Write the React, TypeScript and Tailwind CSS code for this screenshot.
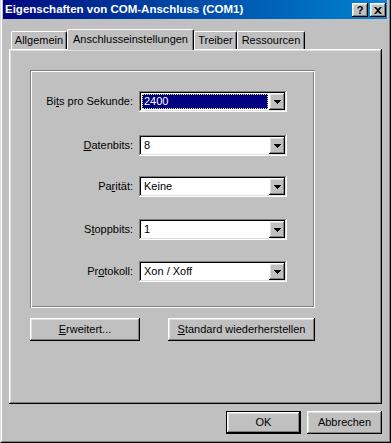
import React from 'react';

const raised =
  'shadow-[inset_-1px_-1px_#000,inset_1px_1px_#fff,inset_-2px_-2px_#808080,inset_2px_2px_#dfdfdf]';
const sunken =
  'shadow-[inset_-1px_-1px_#fff,inset_1px_1px_#808080,inset_-2px_-2px_#dfdfdf,inset_2px_2px_#000]';

function Arrow() {
  return (
    <svg width="7" height="4" viewBox="0 0 7 4">
      <path d="M0 0h7v1H0zM1 1h5v1H1zM2 2h3v1H2zM3 3h1v1H3z" fill="#000" />
    </svg>
  );
}

function Combo({ value, selected }: { value: string; selected?: boolean }) {
  return (
    <div className={`h-[21px] w-[148px] bg-white flex items-center p-[2px] ${sunken}`}>
      <div className="flex-1 h-full flex items-center pl-[1px] pr-[1px]">
        {selected ? (
          <div className="h-[15px] w-full bg-[#000080] text-white border border-dotted border-[#e8e880] flex items-center pl-[1px] leading-none">
            {value}
          </div>
        ) : (
          <span className="pl-[2px] leading-none">{value}</span>
        )}
      </div>
      <div className={`w-[16px] h-[17px] bg-[#c0c0c0] flex items-center justify-center ${raised}`}>
        <Arrow />
      </div>
    </div>
  );
}

function Btn({ children, w, isDefault }: { children: React.ReactNode; w: string; isDefault?: boolean }) {
  return (
    <div className={`${w} h-[23px] ${isDefault ? 'border border-black' : ''}`}>
      <div className={`w-full h-full bg-[#c0c0c0] flex items-center justify-center ${raised}`}>{children}</div>
    </div>
  );
}

const rows: { label: React.ReactNode; value: string; mt: string; selected?: boolean }[] = [
  { label: <>Bi<u>t</u>s pro Sekunde:</>, value: '2400', mt: 'mt-[21px]', selected: true },
  { label: <><u>D</u>atenbits:</>, value: '8', mt: 'mt-[23px]' },
  { label: <>Pa<u>r</u>ität:</>, value: 'Keine', mt: 'mt-[20px]' },
  { label: <>S<u>t</u>oppbits:</>, value: '1', mt: 'mt-[22px]' },
  { label: <>Pr<u>o</u>tokoll:</>, value: 'Xon / Xoff', mt: 'mt-[21px]' },
];

export default function App() {
  return (
    <div
      className="w-[391px] h-[443px] bg-[#c0c0c0] text-black text-[11px] border-l border-r border-b border-l-[#dfdfdf] border-r-black border-b-black"
      style={{ fontFamily: '"Liberation Sans", Arial, sans-serif' }}
    >
      <div className="h-full border-l border-r border-b border-l-white border-r-[#808080] border-b-[#808080] pl-[1px] pr-[2px] pb-[1px] flex flex-col">
        {/* title bar */}
        <div className="h-[19px] bg-gradient-to-r from-[#000080] to-[#1084d0] flex items-center pl-[2px] pr-[1px]">
          <span className="text-white font-bold text-[11.5px] leading-none flex-1">
            Eigenschaften von COM-Anschluss (COM1)
          </span>
          <div className={`w-[16px] h-[14px] bg-[#c0c0c0] flex items-center justify-center font-bold text-[11px] leading-none mt-[1px] ${raised}`}>
            ?
          </div>
          <div className={`w-[16px] h-[14px] bg-[#c0c0c0] flex items-center justify-center ml-[2px] mt-[1px] ${raised}`}>
            <svg width="8" height="7" viewBox="0 0 8 7">
              <path d="M0 0h2l2 2 2-2h2L5 3.5 8 7H6L4 5 2 7H0l3-3.5z" fill="#000" />
            </svg>
          </div>
        </div>

        {/* tabs */}
        <div className="mt-[10px] ml-[8px] flex items-end h-[20px] relative z-10">
          <div className="w-[56px] h-[18px] border-t border-l border-white border-r border-r-[#000] rounded-tl-[2px] rounded-tr-[2px] flex items-center justify-center shadow-[inset_-1px_0_#808080]">
            Allgemein
          </div>
          <div className="w-[127px] h-[21px] -mb-[1px] bg-[#c0c0c0] border-t border-l border-white border-r border-r-[#000] rounded-tl-[2px] rounded-tr-[2px] flex items-center justify-center pb-[2px] shadow-[inset_-1px_0_#808080]">
            Anschlusseinstellungen
          </div>
          <div className="w-[43px] h-[18px] border-t border-l border-white border-r border-r-[#000] rounded-tl-[2px] rounded-tr-[2px] flex items-center justify-center shadow-[inset_-1px_0_#808080]">
            Treiber
          </div>
          <div className="w-[68px] h-[18px] border-t border-l border-white border-r border-r-[#000] rounded-tl-[2px] rounded-tr-[2px] flex items-center justify-center shadow-[inset_-1px_0_#808080]">
            Ressourcen
          </div>
        </div>

        {/* panel */}
        <div className="ml-[6px] w-[373px] h-[355px] shadow-[inset_-1px_-1px_#000,inset_1px_1px_#fff,inset_-2px_-2px_#808080,inset_2px_2px_#dfdfdf] pt-[21px] pl-[21px]">
          <div className="w-[285px] h-[238px] shadow-[inset_1px_1px_#808080,inset_-1px_-1px_#fff,inset_2px_2px_#fff,inset_-2px_-2px_#808080] flex flex-col pl-[2px]">
            {rows.map((r, i) => (
              <div key={i} className={`flex items-center ${r.mt}`}>
                <div className="w-[101px] text-right leading-none">{r.label}</div>
                <div className="ml-[6px]">
                  <Combo value={r.value} selected={r.selected} />
                </div>
              </div>
            ))}
          </div>
          <div className="flex mt-[10px]">
            <Btn w="w-[110px]">
              <span><u>E</u>rweitert...</span>
            </Btn>
            <div className="ml-[28px]">
              <Btn w="w-[147px]">
                <span><u>S</u>tandard wiederherstellen</span>
              </Btn>
            </div>
          </div>
        </div>

        {/* footer buttons */}
        <div className="flex justify-end mt-[7px] pr-[5px]">
          <Btn w="w-[75px]" isDefault>
            <span>OK</span>
          </Btn>
          <div className="ml-[6px]">
            <Btn w="w-[75px]">
              <span>Abbrechen</span>
            </Btn>
          </div>
        </div>
      </div>
    </div>
  );
}
